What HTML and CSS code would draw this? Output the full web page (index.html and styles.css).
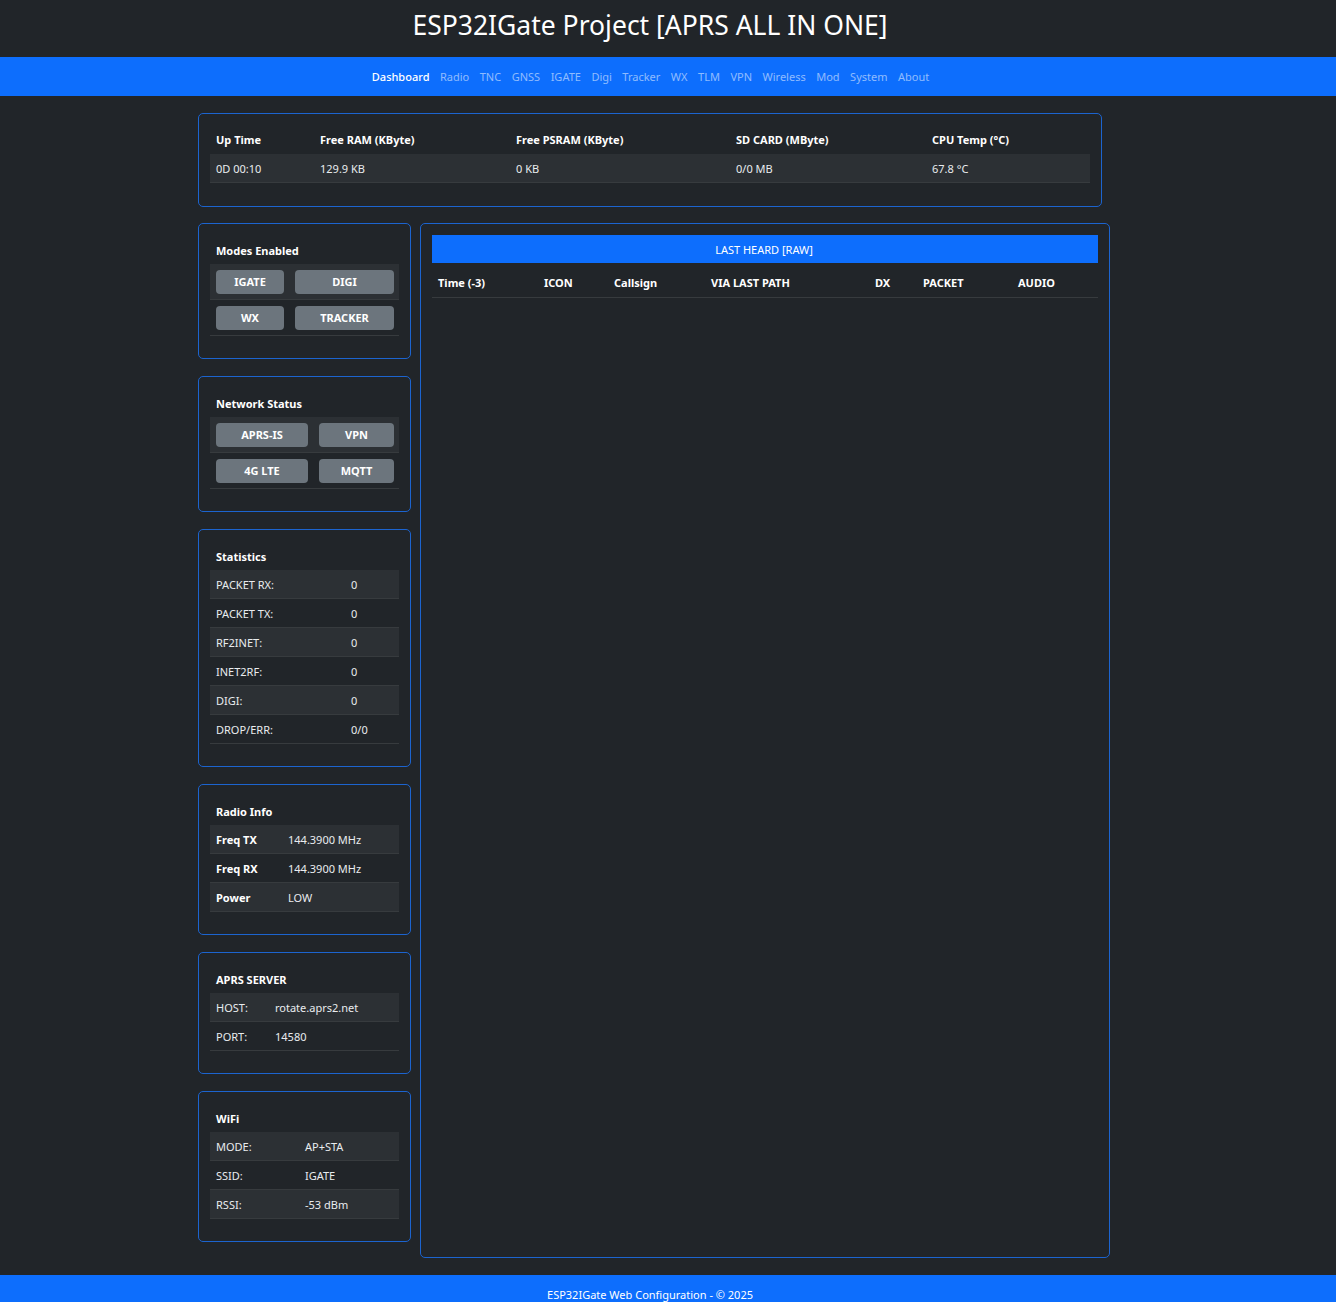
FILE: index.html
```html
<!DOCTYPE html>
<html lang="en">
<head>
<meta charset="utf-8">
<title>ESP32IGate</title>
<link rel="stylesheet" href="styles.css">
</head>
<body>
<header class="site-title"><h1>ESP32IGate Project [APRS ALL IN ONE]</h1></header>
<nav class="navbar">
  <ul class="nav-list">
    <li><a class="active" href="#">Dashboard</a></li>
    <li><a href="#">Radio</a></li>
    <li><a href="#">TNC</a></li>
    <li><a href="#">GNSS</a></li>
    <li><a href="#">IGATE</a></li>
    <li><a href="#">Digi</a></li>
    <li><a href="#">Tracker</a></li>
    <li><a href="#">WX</a></li>
    <li><a href="#">TLM</a></li>
    <li><a href="#">VPN</a></li>
    <li><a href="#">Wireless</a></li>
    <li><a href="#">Mod</a></li>
    <li><a href="#">System</a></li>
    <li><a href="#">About</a></li>
  </ul>
</nav>
<main class="content">
  <section class="card card-top">
    <div class="sys-table">
      <div class="sys-row sys-head">
        <div>Up Time</div><div>Free RAM (KByte)</div><div>Free PSRAM (KByte)</div><div>SD CARD (MByte)</div><div>CPU Temp (°C)</div>
      </div>
      <div class="sys-row striped bordered">
        <div>0D 00:10</div><div>129.9 KB</div><div>0 KB</div><div>0/0 MB</div><div>67.8 °C</div>
      </div>
    </div>
  </section>

  <div class="columns">
    <aside class="side">
      <section class="card">
        <div class="card-title">Modes Enabled</div>
        <div class="btn-row modes striped"><span class="btn">IGATE</span><span class="btn">DIGI</span></div>
        <div class="btn-row modes"><span class="btn">WX</span><span class="btn">TRACKER</span></div>
      </section>

      <section class="card">
        <div class="card-title">Network Status</div>
        <div class="btn-row net striped"><span class="btn">APRS-IS</span><span class="btn">VPN</span></div>
        <div class="btn-row net"><span class="btn">4G LTE</span><span class="btn">MQTT</span></div>
      </section>

      <section class="card">
        <div class="card-title">Statistics</div>
        <div class="kv kv-stats striped"><span>PACKET RX:</span><span>0</span></div>
        <div class="kv kv-stats"><span>PACKET TX:</span><span>0</span></div>
        <div class="kv kv-stats striped"><span>RF2INET:</span><span>0</span></div>
        <div class="kv kv-stats"><span>INET2RF:</span><span>0</span></div>
        <div class="kv kv-stats striped"><span>DIGI:</span><span>0</span></div>
        <div class="kv kv-stats"><span>DROP/ERR:</span><span>0/0</span></div>
      </section>

      <section class="card">
        <div class="card-title">Radio Info</div>
        <div class="kv kv-radio striped"><span class="b">Freq TX</span><span>144.3900 MHz</span></div>
        <div class="kv kv-radio"><span class="b">Freq RX</span><span>144.3900 MHz</span></div>
        <div class="kv kv-radio striped"><span class="b">Power</span><span>LOW</span></div>
      </section>

      <section class="card">
        <div class="card-title">APRS SERVER</div>
        <div class="kv kv-aprs striped"><span>HOST:</span><span>rotate.aprs2.net</span></div>
        <div class="kv kv-aprs"><span>PORT:</span><span>14580</span></div>
      </section>

      <section class="card">
        <div class="card-title">WiFi</div>
        <div class="kv kv-wifi striped"><span>MODE:</span><span>AP+STA</span></div>
        <div class="kv kv-wifi"><span>SSID:</span><span>IGATE</span></div>
        <div class="kv kv-wifi striped"><span>RSSI:</span><span>-53 dBm</span></div>
      </section>
    </aside>

    <section class="card card-heard">
      <div class="heard-bar">LAST HEARD [RAW]</div>
      <div class="heard-head">
        <span>Time (-3)</span><span>ICON</span><span>Callsign</span><span>VIA LAST PATH</span><span>DX</span><span>PACKET</span><span>AUDIO</span>
      </div>
    </section>
  </div>
</main>
<footer class="footer">ESP32IGate Web Configuration - © 2025</footer>
</body>
</html>
```
FILE: styles.css
```css
* { box-sizing: border-box; }
html, body { margin: 0; padding: 0; }
body {
  background: #212529;
  color: #e9ecef;
  font-family: "Noto Sans", "Open Sans", sans-serif;
  font-size: 11px;
  line-height: 17px;
}
.site-title {
  height: 57px;
  display: flex;
  align-items: center;
  justify-content: center;
  padding-right: 36px;
}
.site-title h1 {
  margin: 0;
  font-weight: 400;
  font-size: 26.5px;
  line-height: 34px;
  color: #fff;
  padding-bottom: 7px;
}
.navbar {
  background: #0d6efd;
  height: 39px;
  padding-right: 36px;
}
.nav-list {
  list-style: none;
  margin: 0;
  padding: 0 0 0 1px;
  height: 100%;
  display: flex;
  align-items: center;
  justify-content: center;
  gap: 10.5px;
}
.nav-list a {
  color: rgba(255,255,255,0.55);
  text-decoration: none;
  font-size: 11px;
}
.nav-list a.active { color: #fff; font-weight: 500; }

.content {
  padding: 17px 0 0 198px;
}
.card {
  border: 1px solid #1c64cf;
  border-radius: 5px;
  padding: 12px 11px 22px;
}
.card-top { width: 904px; padding-bottom: 23px; }
.striped { background: #2c3034; }
.sys-row {
  display: grid;
  grid-template-columns: 104px 196px 220px 196px 1fr;
  height: 28px;
  align-items: center;
}
.sys-row.bordered { height: 29px; }
.sys-row > div { padding: 0 6px; }
.sys-head { font-weight: 700; color: #fff; padding-bottom: 1px; }
.bordered { border-bottom: 1px solid #373b3e; }

.columns {
  display: flex;
  gap: 9px;
  margin-top: 16px;
  align-items: flex-start;
}
.side {
  width: 213px;
  display: flex;
  flex-direction: column;
  gap: 17px;
}
.card-title {
  height: 28px;
  display: flex;
  align-items: center;
  padding: 0 6px;
  font-weight: 700;
  color: #fff;
}
.btn-row {
  display: grid;
  height: 36px;
  align-items: center;
  border-bottom: 1px solid #373b3e;
  padding: 1px 5px 0 6px;
  column-gap: 11px;
}
.btn-row.modes { grid-template-columns: 68px 1fr; }
.btn-row.net { grid-template-columns: 92px 1fr; }
.btn {
  display: block;
  height: 24px;
  line-height: 24px;
  background: #6c757d;
  color: #fff;
  border-radius: 4px;
  text-align: center;
  font-weight: 700;
}
.kv {
  display: grid;
  height: 29px;
  align-items: center;
  border-bottom: 1px solid #373b3e;
}
.kv > span { padding: 0 6px; }
.kv-stats { grid-template-columns: 135px 1fr; }
.kv-radio { grid-template-columns: 72px 1fr; }
.kv-aprs { grid-template-columns: 59px 1fr; }
.kv-wifi { grid-template-columns: 89px 1fr; }
.b { font-weight: 700; color: #fff; }

.card-heard {
  width: 690px;
  height: 1035px;
  padding-top: 11px;
}
.heard-bar {
  background: #0d6efd;
  color: #fff;
  height: 28px;
  display: flex;
  align-items: center;
  justify-content: center;
  padding-right: 2px;
}
.heard-head {
  display: grid;
  grid-template-columns: 106px 70px 97px 164px 48px 95px 1fr;
  height: 35px;
  padding-top: 11px;
  border-bottom: 1px solid #373b3e;
  font-weight: 700;
  color: #fff;
}
.heard-head > span { padding: 0 6px; }

.footer {
  margin-top: 17px;
  background: #0d6efd;
  color: #fff;
  text-align: center;
  padding: 11px 36px 12px 0;
  height: 60px;
}
```
